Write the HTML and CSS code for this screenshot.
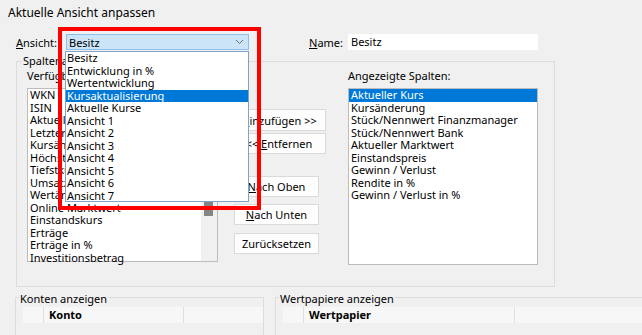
FILE: index.html
```html
<!DOCTYPE html>
<html lang="de">
<head>
    <meta charset="UTF-8">
    <title>Aktuelle Ansicht anpassen</title>
    <link rel="stylesheet" href="styles.css">
</head>
<body>
<div class="dialog">
    <div class="titlebar">Aktuelle Ansicht anpassen</div>
    <div class="content">
        <div class="top-row">
            <span class="lbl-ansicht"><u>A</u>nsicht:</span>
            <div class="combo">
                <span>Besitz</span>
                <svg width="9" height="6" viewBox="0 0 9 6"><polyline points="1,1 4.5,4.5 8,1" fill="none" stroke="#707070" stroke-width="1"/></svg>
            </div>
            <span class="lbl-name"><u>N</u>ame:</span>
            <div class="textbox">Besitz</div>
        </div>

        <div class="group group-main">
            <div class="group-title">Spaltenanordnung</div>
            <div class="group-cols">
                <div class="col-left">
                    <div class="col-label">Verfügbare Spalten:</div>
                    <div class="listbox list-left">
                        <div class="items">
                            <div class="list-item">WKN</div>
                            <div class="list-item">ISIN</div>
                            <div class="list-item">Aktuelles Datum</div>
                            <div class="list-item">Letzter Kurs</div>
                            <div class="list-item">Kursänderung in %</div>
                            <div class="list-item">Höchstkurs</div>
                            <div class="list-item">Tiefstkurs</div>
                            <div class="list-item">Umsatz</div>
                            <div class="list-item">Wertänderung</div>
                            <div class="list-item">Online Marktwert</div>
                            <div class="list-item">Einstandskurs</div>
                            <div class="list-item">Erträge</div>
                            <div class="list-item">Erträge in %</div>
                            <div class="list-item">Investitionsbetrag</div>
                        </div>
                        <div class="scrollbar"><div class="thumb"></div></div>
                    </div>
                </div>

                <div class="col-buttons">
                    <div class="btn btn-wide btn-first"><span><u>H</u>inzufügen &gt;&gt;</span></div>
                    <div class="btn btn-wide btn-second"><span>&lt;&lt; <u>E</u>ntfernen</span></div>
                    <div class="btn btn-narrow btn-up"><span><u>N</u>ach Oben</span></div>
                    <div class="btn btn-narrow btn-down"><span><u>N</u>ach Unten</span></div>
                    <div class="btn btn-narrow btn-reset"><span>Zurücksetzen</span></div>
                </div>

                <div class="col-right">
                    <div class="col-label">Angezeigte Spalten:</div>
                    <div class="listbox list-right">
                        <div class="list-item selected">Aktueller Kurs</div>
                        <div class="list-item">Kursänderung</div>
                        <div class="list-item">Stück/Nennwert Finanzmanager</div>
                        <div class="list-item">Stück/Nennwert Bank</div>
                        <div class="list-item">Aktueller Marktwert</div>
                        <div class="list-item">Einstandspreis</div>
                        <div class="list-item">Gewinn / Verlust</div>
                        <div class="list-item">Rendite in %</div>
                        <div class="list-item">Gewinn / Verlust in %</div>
                    </div>
                </div>
            </div>
        </div>

        <div class="bottom-row">
            <div class="group group-small group-konten">
                <div class="group-title small-title">Konten anzeigen</div>
                <div class="lv-header">
                    <div class="lv-cell lv-check"></div>
                    <div class="lv-cell lv-konto">Konto</div>
                    <div class="lv-cell lv-rest"></div>
                </div>
            </div>
            <div class="group group-small group-wp">
                <div class="group-title small-title">Wertpapiere anzeigen</div>
                <div class="lv-header">
                    <div class="lv-cell lv-check"></div>
                    <div class="lv-cell lv-wp">Wertpapier</div>
                    <div class="lv-cell lv-rest"></div>
                </div>
            </div>
        </div>
    </div>

    <!-- open combo list -->
    <div class="dropdown">
        <div class="list-item">Besitz</div>
        <div class="list-item">Entwicklung in %</div>
        <div class="list-item">Wertentwicklung</div>
        <div class="list-item selected">Kursaktualisierung</div>
        <div class="list-item">Aktuelle Kurse</div>
        <div class="list-item">Ansicht 1</div>
        <div class="list-item">Ansicht 2</div>
        <div class="list-item">Ansicht 3</div>
        <div class="list-item">Ansicht 4</div>
        <div class="list-item">Ansicht 5</div>
        <div class="list-item">Ansicht 6</div>
        <div class="list-item">Ansicht 7</div>
    </div>
    <div class="mark"></div>
</div>
</body>
</html>
```

FILE: styles.css
```css
* {
    box-sizing: border-box;
}
body {
    margin: 0;
    width: 642px;
    height: 335px;
    overflow: hidden;
    background: #f0f0f0;
    font-family: "Noto Sans", sans-serif;
    font-size: 11px;
    color: #000;
}
.dialog {
    position: relative;
    height: 335px;
}
.titlebar {
    height: 25px;
    line-height: 25px;
    padding-left: 8px;
    font-size: 12px;
}
.content {
    padding: 9px 0 0 16px;
}

/* top row */
.top-row {
    display: flex;
    align-items: center;
    height: 16px;
}
.lbl-ansicht {
    width: 50px;
}
.combo {
    width: 183px;
    height: 16px;
    background: #cce4f7;
    border: 1px solid #8cbfea;
    display: flex;
    align-items: center;
    justify-content: space-between;
    padding: 0 4px 0 2px;
}
.lbl-name {
    margin-left: 60px;
    width: 39px;
}
.textbox {
    width: 190px;
    height: 16px;
    line-height: 16px;
    background: #fff;
    padding-left: 3px;
}

/* group boxes */
.group {
    border: 1px solid #dcdcdc;
}
.group-title {
    width: fit-content;
    margin: -7px 0 0 5px;
    padding: 0 1px;
    line-height: 12px;
    background: #f0f0f0;
}
.group-main {
    margin-top: 11px;
    width: 539px;
    height: 226px;
}
.group-cols {
    display: flex;
    padding: 2px 0 0 10px;
}
.col-left {
    width: 191px;
}
.col-label {
    line-height: 14px;
    margin-bottom: 5px;
}
.listbox {
    background: #fff;
    border: 1px solid #bcbcbc;
}
.list-left {
    height: 174px;
    display: flex;
}
.list-left .items {
    flex: 1;
}
.scrollbar {
    width: 16px;
    background: #f0f0f0;
    padding: 92px 0 0 3px;
}
.thumb {
    width: 9px;
    height: 35px;
    background: #858585;
}
.list-item {
    line-height: 12.5px;
    padding-left: 2px;
    white-space: nowrap;
}
.list-item.selected {
    background: #0078d7;
    color: #fff;
}

/* buttons */
.col-buttons {
    width: 94px;
    margin-left: 14px;
    padding-top: 40px;
    display: flex;
    flex-direction: column;
}
.btn {
    height: 21px;
    background: #fdfdfd;
    border: 1px solid #dadada;
    display: flex;
    align-items: center;
    justify-content: center;
}
.btn-wide {
    width: 94px;
}
.btn-first {
    height: 22px;
}
.btn-second {
    margin-top: 2px;
}
.btn-narrow {
    width: 85px;
    margin-left: 2px;
}
.btn-up {
    margin-top: 22px;
}
.btn-down {
    margin-top: 7px;
}
.btn-reset {
    margin-top: 8px;
}

.col-right {
    width: 190px;
    margin-left: 22px;
}
.list-right {
    height: 177px;
}

/* bottom */
.bottom-row {
    display: flex;
    margin-top: 10px;
}
.group-small {
    height: 50px;
    border-bottom: none;
}
.group-konten {
    width: 249px;
    margin-left: -1px;
}
.group-wp {
    flex: 1;
    margin-left: 11px;
    border-right: none;
}
.small-title {
    margin-top: -5px;
    margin-left: 3px;
}
.lv-header {
    display: flex;
    height: 16px;
    margin: 2px 0 0 7px;
    background: #f7f7f7;
}
.lv-cell {
    border-right: 1px solid #dedede;
    font-weight: bold;
    line-height: 16px;
    padding-left: 5px;
}
.lv-check {
    width: 21px;
}
.lv-konto {
    width: 140px;
}
.lv-wp {
    width: 211px;
}
.lv-rest {
    flex: 1;
    border-right: none;
}

/* open combo list and the red frame lie over the dialog */
.dropdown {
    position: absolute;
    left: 65px;
    top: 51px;
    width: 184px;
    height: 151px;
    background: #fff;
    border: 1px solid #7fa3cc;
}
.dropdown .list-item {
    padding-left: 1px;
}
.mark {
    position: absolute;
    left: 58px;
    top: 27px;
    width: 203px;
    height: 183px;
    border: 4px solid #ff0000;
}
```
